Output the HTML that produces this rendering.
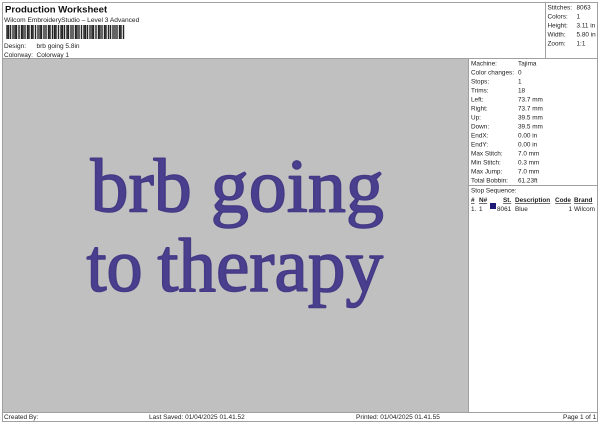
<!DOCTYPE html>
<html><head><meta charset="utf-8"><style>
html,body{margin:0;padding:0;width:600px;height:424px;overflow:hidden;background:#fff}
svg{display:block}
text{font-family:"Liberation Sans",sans-serif;font-size:6.4px;fill:#222}
.b{font-weight:bold;text-decoration:underline}
.e{font-family:"Liberation Serif",serif;font-size:76px;fill:#4a3f8e;stroke:#453a86;stroke-width:1.6px;stroke-linejoin:round}
</style></head><body>
<svg width="600" height="424" viewBox="0 0 600 424" xmlns="http://www.w3.org/2000/svg">
<rect width="600" height="424" fill="#fff"/>
<rect x="3" y="59" width="465" height="353" fill="#c0c0c0"/>
<g fill="none" stroke="#a0a0a0" stroke-width="1">
<path d="M2.5 2.5H597.5V421.5H2.5Z"/>
<path d="M2.5 58.5H597.5M545.5 2.5V58.5M468.5 58.5V412.5M2.5 412.5H597.5M469 185.5H597.5"/>
</g>
<text x="5" y="12.5" style="font-size:9.6px;font-weight:bold;fill:#111">Production Worksheet</text>
<text x="4" y="22" style="font-size:6.6px">Wilcom EmbroideryStudio – Level 3 Advanced</text>
<path d="M7 25V39M8.5 25V39M10.5 25V39M13 25V39M15 25V39M16.5 25V39M19 25V39M21.5 25V39M23 25V39M25 25V39M27.5 25V39M29 25V39M31.5 25V39M33 25V39M35.5 25V39M38 25V39M40 25V39M41.5 25V39M44 25V39M46 25V39M48.5 25V39M50 25V39M52.5 25V39M54.5 25V39M56 25V39M58.5 25V39M61 25V39M62.5 25V39M64.5 25V39M67 25V39M68.5 25V39M71 25V39M73 25V39M75.5 25V39M77 25V39M79 25V39M81.5 25V39M84 25V39M85.5 25V39M87.5 25V39M90 25V39M92 25V39M93.5 25V39M96 25V39M98.5 25V39M100 25V39M102 25V39M104.5 25V39M106 25V39M108.5 25V39M110.5 25V39M113 25V39M115 25V39M117 25V39M119.5 25V39M121 25V39M123.5 25V39" stroke="#222" stroke-width="1.4" fill="none"/>
<text x="4" y="48" style="font-size:6.5px">Design:</text><text x="36.5" y="48" style="font-size:6.5px">brb going 5.8in</text>
<text x="4" y="57" style="font-size:6.5px">Colorway:</text><text x="36.5" y="57" style="font-size:6.5px">Colorway 1</text>
<text x="547.5" y="9.5">Stitches:</text><text x="576.5" y="9.5">8063</text>
<text x="547.5" y="18.5">Colors:</text><text x="576.5" y="18.5">1</text>
<text x="547.5" y="27.5">Height:</text><text x="576.5" y="27.5">3.11 in</text>
<text x="547.5" y="36.5">Width:</text><text x="576.5" y="36.5">5.80 in</text>
<text x="547.5" y="45.5">Zoom:</text><text x="576.5" y="45.5">1:1</text>
<text x="471" y="65.5">Machine:</text><text x="518" y="65.5">Tajima</text>
<text x="471" y="74.5">Color changes:</text><text x="518" y="74.5">0</text>
<text x="471" y="83.5">Stops:</text><text x="518" y="83.5">1</text>
<text x="471" y="92.5">Trims:</text><text x="518" y="92.5">18</text>
<text x="471" y="101.5">Left:</text><text x="518" y="101.5">73.7 mm</text>
<text x="471" y="110.5">Right:</text><text x="518" y="110.5">73.7 mm</text>
<text x="471" y="119.5">Up:</text><text x="518" y="119.5">39.5 mm</text>
<text x="471" y="128.5">Down:</text><text x="518" y="128.5">39.5 mm</text>
<text x="471" y="137.5">EndX:</text><text x="518" y="137.5">0.00 in</text>
<text x="471" y="146.5">EndY:</text><text x="518" y="146.5">0.00 in</text>
<text x="471" y="155.5">Max Stitch:</text><text x="518" y="155.5">7.0 mm</text>
<text x="471" y="164.5">Min Stitch:</text><text x="518" y="164.5">0.3 mm</text>
<text x="471" y="173.5">Max Jump:</text><text x="518" y="173.5">7.0 mm</text>
<text x="471" y="182.5">Total Bobbin:</text><text x="518" y="182.5">61.23ft</text>
<text x="471" y="192.5">Stop Sequence:</text>
<text x="471" y="202" class="b">#</text>
<text x="479" y="202" class="b">N#</text>
<text x="503" y="202" class="b">St.</text>
<text x="515" y="202" class="b">Description</text>
<text x="555" y="202" class="b">Code</text>
<text x="574" y="202" class="b">Brand</text>
<text x="471" y="211">1.</text><text x="479" y="211">1</text>
<rect x="490" y="203" width="6" height="6" fill="#1f1a78"/>
<text x="497" y="211">8061</text><text x="515" y="211">Blue</text>
<text x="568.5" y="211">1</text><text x="574" y="211">Wilcom</text>
<text class="e" transform="translate(90.5 211.5) scale(1 1)">brb going</text>
<text class="e" transform="translate(86.5 291) scale(.95 1)">to</text>
<text class="e" transform="translate(157.5 291) scale(.99 1)">therapy</text>
<text x="4" y="419" style="font-size:6.5px">Created By:</text>
<text x="149" y="419" style="font-size:6.5px">Last Saved: 01/04/2025 01.41.52</text>
<text x="356" y="419" style="font-size:6.5px">Printed: 01/04/2025 01.41.55</text>
<text x="563" y="419" style="font-size:6.5px">Page 1 of 1</text>
</svg>
</body></html>
